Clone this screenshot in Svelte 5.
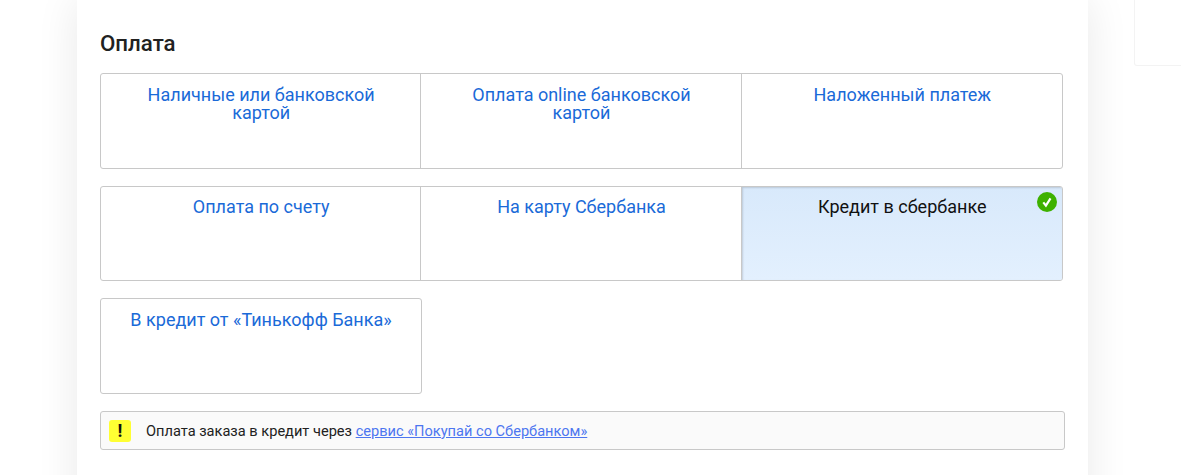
<script lang="ts">
  const rows = [
    [
      { label: "Наличные или банковской картой" },
      { label: "Оплата online банковской картой" },
      { label: "Наложенный платеж" },
    ],
    [
      { label: "Оплата по счету" },
      { label: "На карту Сбербанка" },
      { label: "Кредит в сбербанке", active: true },
    ],
    [{ label: "В кредит от «Тинькофф Банка»" }],
  ];
</script>

<div class="page">
  <main class="card">
    <h2>Оплата</h2>

    {#each rows as row}
      <div class="row" class:single={row.length === 1}>
        {#each row as item}
          <div class="option" class:active={item.active}>
            {#if item.active}
              <span class="label">{item.label}</span>
              <svg class="check" width="20" height="20" viewBox="0 0 20 20">
                <circle cx="10" cy="10" r="10" fill="#3eb100" />
                <path
                  d="M6.3 10.4 L8.9 13.6 L13.5 6.4"
                  fill="none"
                  stroke="#fff"
                  stroke-width="2.2"
                />
              </svg>
            {:else}
              <a href="#pay" class="label">{item.label}</a>
            {/if}
          </div>
        {/each}
      </div>
    {/each}

    <div class="note">
      <span class="mark">!</span>
      <span>Оплата заказа в кредит через <a href="#sber">сервис «Покупай со Сбербанком»</a></span>
    </div>
  </main>
  <aside class="side"></aside>
</div>

<style>
  :global(body) {
    background: #fff;
    overflow: hidden;
  }

  .page {
    display: flex;
    align-items: flex-start;
    height: 475px;
    padding-left: 77px;
    font-family: Roboto, "Liberation Sans", sans-serif;
    overflow: hidden;
  }

  .card {
    flex: none;
    box-sizing: border-box;
    width: 1011px;
    height: 520px;
    padding: 31px 25px 0 23px;
    background: #fff;
    box-shadow: 0 0 40px rgba(0, 0, 0, 0.09);
  }

  h2 {
    margin: 0 0 18px;
    font-size: 22.3px;
    line-height: 24px;
    font-weight: 500;
    color: #212121;
  }

  .row {
    display: grid;
    grid-template-columns: repeat(3, 1fr);
    width: 963px;
    height: 96px;
    margin-bottom: 17px;
    box-sizing: border-box;
    border: 1px solid #c8c8c8;
    border-radius: 3px;
  }

  .row + .row {
    height: 95px;
  }

  .row.single {
    grid-template-columns: 1fr;
    width: 322px;
    height: 96px;
    margin-bottom: 17px;
  }

  .option {
    position: relative;
    box-sizing: border-box;
    padding: 12px 20px 0 21px;
    text-align: center;
    font-size: 18px;
    line-height: 18px;
    border-right: 1px solid #c8c8c8;
  }

  .row + .row .option {
    padding-top: 11px;
  }

  .row.single .option {
    padding: 12px 20px 0;
  }

  .option:last-child {
    border-right: none;
  }

  .option a {
    color: #1a6ad8;
    text-decoration: none;
  }

  .option.active {
    color: #111;
    background: linear-gradient(#d8e9fb, #e3f0fe);
    box-shadow: inset 1px 1px 2px rgba(0, 0, 0, 0.14);
    border-radius: 0 2px 2px 0;
  }

  .check {
    position: absolute;
    top: 5px;
    right: 5px;
  }

  .note {
    display: flex;
    align-items: center;
    gap: 15px;
    box-sizing: border-box;
    width: 965px;
    height: 39px;
    padding-left: 8px;
    background: #fafafa;
    border: 1px solid #c8c8c8;
    border-radius: 3px;
    font-size: 14.6px;
    color: #212121;
  }

  .note a {
    color: #4d76f0;
    text-decoration: underline;
  }

  .mark {
    flex: none;
    width: 22px;
    height: 22px;
    border-radius: 3px;
    background: #ffff33;
    text-align: center;
    font-size: 18px;
    line-height: 22px;
    font-weight: 700;
    color: #111;
  }

  .side {
    flex: none;
    box-sizing: border-box;
    width: 60px;
    height: 66px;
    margin-left: 46px;
    background: #fff;
    border: 1px solid #f3f3f3;
    border-top: none;
    border-radius: 0 0 0 3px;
  }
</style>
